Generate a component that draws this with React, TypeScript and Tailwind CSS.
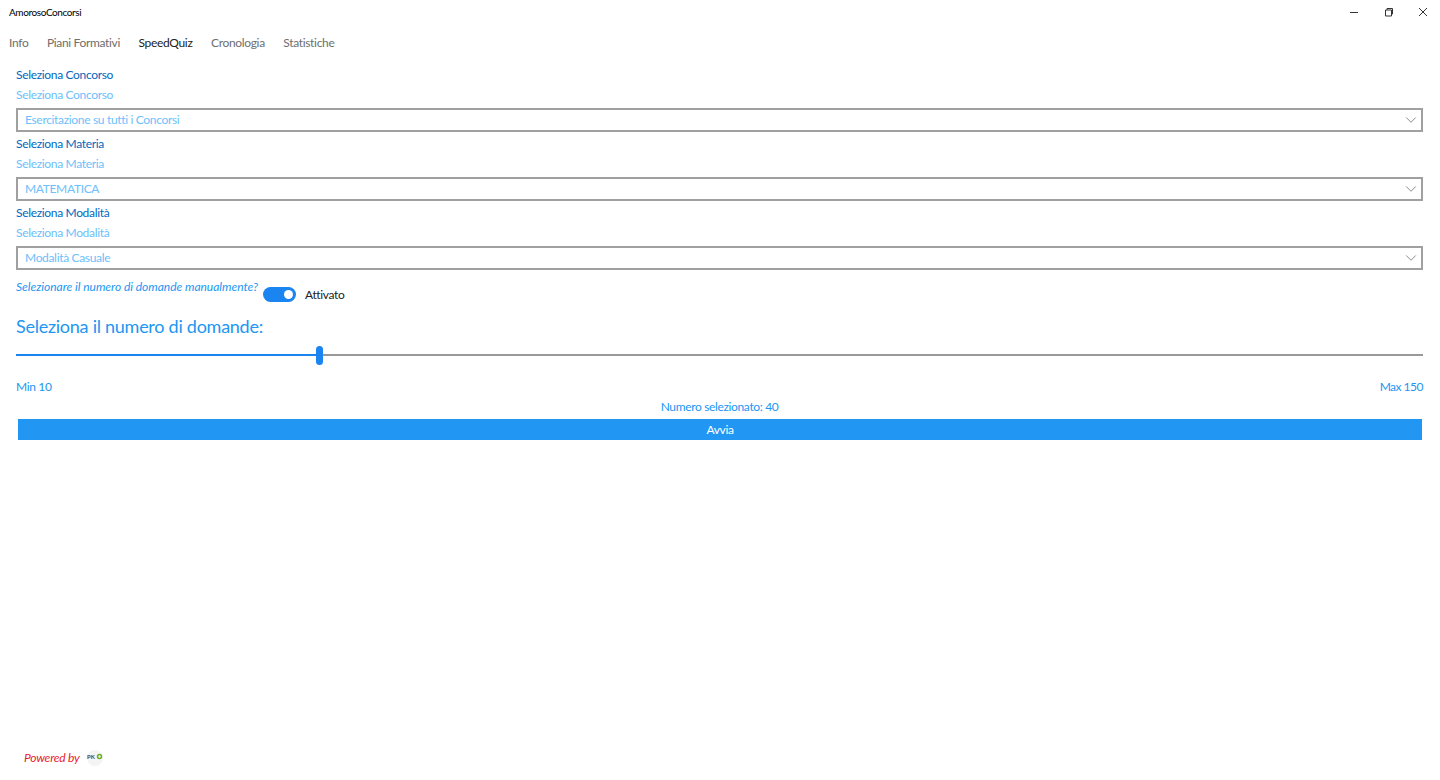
import { ChevronDown } from "lucide-react";

const selects = [
  { label: "Seleziona Concorso", value: "Esercitazione su tutti i Concorsi" },
  { label: "Seleziona Materia", value: "MATEMATICA" },
  { label: "Seleziona Modalità", value: "Modalità Casuale" },
];

const tabs = ["Info", "Piani Formativi", "SpeedQuiz", "Cronologia", "Statistiche"];

function TitleBar() {
  return (
    <div className="flex h-6 items-center justify-between pl-[9px]">
      <span className="text-[10px] tracking-[-0.4px] text-black">AmorosoConcorsi</span>
      <div className="flex items-center text-[#333]">
        <div className="flex w-[34px] justify-center">
          <svg width="10" height="10" viewBox="0 0 10 10" fill="none" stroke="currentColor">
            <path d="M1 5.500h8" />
          </svg>
        </div>
        <div className="flex w-[35px] justify-center">
          <svg width="10" height="10" viewBox="0 0 10 10" fill="none" stroke="currentColor">
            <path d="M1.500 3h6v6h-6zM3 3V1.500h5.500V7H7.500" />
          </svg>
        </div>
        <div className="flex w-[34px] justify-center">
          <svg width="10" height="10" viewBox="0 0 10 10" fill="none" stroke="currentColor">
            <path d="M1 1l8 8M9 1L1 9" />
          </svg>
        </div>
      </div>
    </div>
  );
}

function SelectField({ label, value }: { label: string; value: string }) {
  return (
    <div>
      <p className="h-5 text-[12px] leading-5 tracking-[-0.33px] text-[#0067c0]">{label}</p>
      <p className="mb-[3px] h-5 text-[12px] leading-5 tracking-[-0.33px] text-[#6cc0fb]">{label}</p>
      <div className="mb-[2px] flex h-6 items-center justify-between border-2 border-[#a0a0a0] pl-[7px] pr-[1px]">
        <span className="text-[12px] tracking-[-0.33px] text-[#6cc0fb]">{value}</span>
        <ChevronDown className="h-[18px] w-[18px] text-[#666]" strokeWidth={1} />
      </div>
    </div>
  );
}

export default function App() {
  return (
    <div className="flex h-[780px] flex-col bg-white font-['Lato',sans-serif]">
      <TitleBar />
      <nav className="mt-[9px] flex h-5 items-center gap-[18.5px] pl-[9px] text-[12px] tracking-[-0.33px] text-[#6e6e6e]">
        {tabs.map((tab) => (
          <span key={tab} className={tab === "SpeedQuiz" ? "text-[#222]" : ""}>
            {tab}
          </span>
        ))}
      </nav>
      <main className="mt-[12px] flex flex-col pl-4 pr-[17px]">
        {selects.map((s) => (
          <SelectField key={s.label} {...s} />
        ))}
        <div className="mt-[7px] flex items-start">
          <span className="text-[12px] italic leading-4 tracking-[-0.02px] text-[#2196f3]">
            Selezionare il numero di domande manualmente?
          </span>
          <div className="ml-[5px] mt-[8px] flex h-[15px] w-[33px] items-center justify-end rounded-full bg-[#1a84f0] pr-[3px]">
            <span className="h-[9px] w-[9px] rounded-full bg-white" />
          </div>
          <span className="ml-[9px] mt-[6px] text-[12px] leading-5 tracking-[-0.35px] text-[#222]">Attivato</span>
        </div>
        <h2 className="mt-[9px] text-[18px] leading-6 tracking-[-0.26px] text-[#2196f3]">
          Seleziona il numero di domande:
        </h2>
        <div className="relative mt-[8px] flex h-[18px] items-center">
          <div className="h-[2px] w-[303px] bg-[#1a84f0]" />
          <div className="h-[2px] flex-1 bg-[#999]" />
          <div className="absolute left-[300px] top-0 h-[19px] w-[7px] rounded-full bg-[#1a84f0]" />
        </div>
        <div className="mt-[13px] flex h-5 items-center justify-between text-[12px] tracking-[-0.35px] text-[#2196f3]">
          <span>Min 10</span>
          <span className="tracking-[-0.5px]">Max 150</span>
        </div>
        <p className="h-5 text-center text-[12px] leading-5 tracking-[-0.35px] text-[#2196f3]">Numero selezionato: 40</p>
        <button className="ml-[2px] mr-[1px] mt-[2px] h-[21px] bg-[#2196f3] text-[12px] tracking-[-0.35px] text-white">Avvia</button>
      </main>
      <footer className="mb-[13px] mt-auto flex items-center pl-6">
        <span className="text-[12px] italic tracking-[-0.2px] text-[#e8192c]">Powered by</span>
        <svg className="ml-[5px]" width="20" height="16" viewBox="0 0 20 16">
          <circle cx="10" cy="8" r="8" fill="#f4f4f4" />
          <text x="2" y="9" fontSize="6" fontWeight="700" fill="#444">PK</text>
          <circle cx="14.500" cy="6.500" r="2" fill="none" stroke="#6ab023" strokeWidth="1.500" />
        </svg>
      </footer>
    </div>
  );
}
